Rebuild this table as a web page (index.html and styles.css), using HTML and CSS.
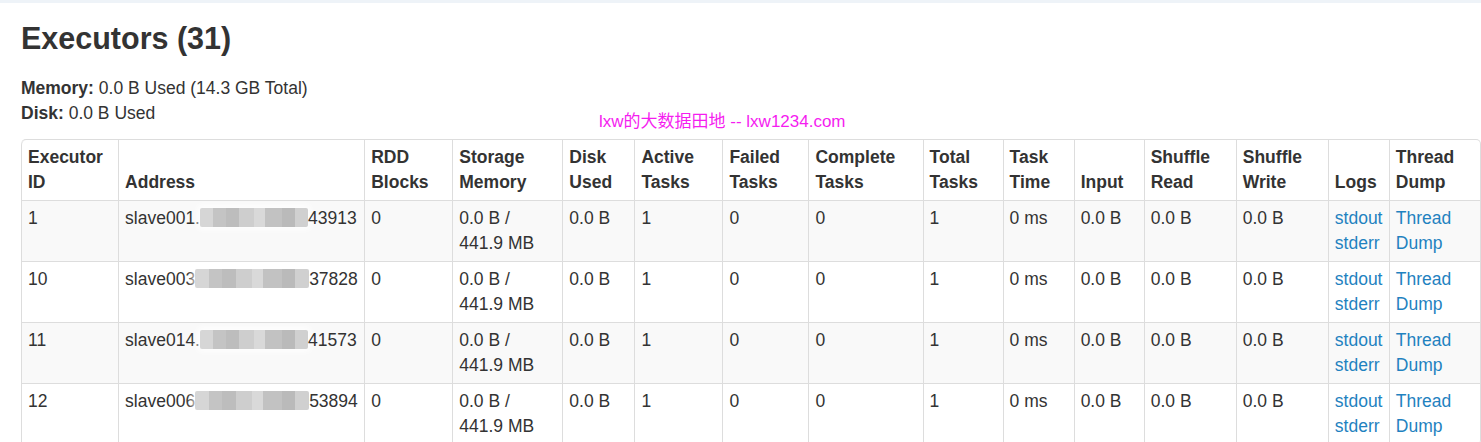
FILE: index.html
```html
<!DOCTYPE html>
<html>
<head>
<meta charset="utf-8">
<title>Executors</title>
<link rel="stylesheet" href="styles.css">
</head>
<body>
<div class="topband"></div>
<div class="container">
  <h3 class="title">Executors (31)</h3>
  <ul class="summary">
    <li><strong>Memory:</strong> 0.0 B Used (14.3 GB Total)</li>
    <li><strong>Disk:</strong> 0.0 B Used</li>
  </ul>
  <div class="watermark">lxw的大数据田地 -- lxw1234.com</div>
  <table class="table">
    <colgroup>
      <col class="c1"><col class="c2"><col class="c3"><col class="c4"><col class="c5">
      <col class="c6"><col class="c7"><col class="c8"><col class="c9"><col class="c10">
      <col class="c11"><col class="c12"><col class="c13"><col class="c14"><col class="c15">
    </colgroup>
    <thead>
      <tr>
        <th>Executor ID</th><th>Address</th><th>RDD Blocks</th><th>Storage Memory</th><th>Disk Used</th>
        <th>Active Tasks</th><th>Failed Tasks</th><th>Complete Tasks</th><th>Total Tasks</th><th>Task Time</th>
        <th>Input</th><th>Shuffle Read</th><th>Shuffle Write</th><th>Logs</th><th>Thread Dump</th>
      </tr>
    </thead>
    <tbody>
      <tr>
        <td>1</td><td class="addr">slave001.<span class="blur w1"></span>43913</td><td>0</td><td>0.0 B / 441.9 MB</td><td>0.0 B</td>
        <td>1</td><td>0</td><td>0</td><td>1</td><td>0 ms</td><td>0.0 B</td><td>0.0 B</td><td>0.0 B</td>
        <td><a href="#">stdout</a><br><a href="#">stderr</a></td><td><a href="#">Thread Dump</a></td>
      </tr>
      <tr>
        <td>10</td><td class="addr">slave003<span class="blur w2"></span>37828</td><td>0</td><td>0.0 B / 441.9 MB</td><td>0.0 B</td>
        <td>1</td><td>0</td><td>0</td><td>1</td><td>0 ms</td><td>0.0 B</td><td>0.0 B</td><td>0.0 B</td>
        <td><a href="#">stdout</a><br><a href="#">stderr</a></td><td><a href="#">Thread Dump</a></td>
      </tr>
      <tr>
        <td>11</td><td class="addr">slave014.<span class="blur w3"></span>41573</td><td>0</td><td>0.0 B / 441.9 MB</td><td>0.0 B</td>
        <td>1</td><td>0</td><td>0</td><td>1</td><td>0 ms</td><td>0.0 B</td><td>0.0 B</td><td>0.0 B</td>
        <td><a href="#">stdout</a><br><a href="#">stderr</a></td><td><a href="#">Thread Dump</a></td>
      </tr>
      <tr>
        <td>12</td><td class="addr">slave006<span class="blur w4"></span>53894</td><td>0</td><td>0.0 B / 441.9 MB</td><td>0.0 B</td>
        <td>1</td><td>0</td><td>0</td><td>1</td><td>0 ms</td><td>0.0 B</td><td>0.0 B</td><td>0.0 B</td>
        <td><a href="#">stdout</a><br><a href="#">stderr</a></td><td><a href="#">Thread Dump</a></td>
      </tr>
    </tbody>
  </table>
</div>
</body>
</html>
```
FILE: styles.css
```css
html, body {
  margin: 0;
  padding: 0;
  background: #fff;
  overflow: hidden;
}
body {
  font-family: "Liberation Sans", Arial, sans-serif;
  font-size: 17.5px;
  line-height: 25px;
  color: #333;
}
.topband {
  height: 3px;
  background: #eef3f8;
}
.container {
  position: relative;
  padding-left: 21px;
}
.title {
  margin: 10px 0 13px 0;
  font-size: 30.5px;
  line-height: 50px;
  font-weight: bold;
  color: #333;
}
.summary {
  list-style: none;
  margin: 0 0 13px 0;
  padding: 0;
}
.summary strong {
  font-weight: bold;
}
.watermark {
  position: absolute;
  left: 599px;
  top: 99px;
  font-family: "Liberation Sans", "Noto Sans CJK SC", sans-serif;
  font-size: 17px;
  line-height: 20px;
  color: #f51df0;
  white-space: nowrap;
}
.table {
  width: 1460px;
  table-layout: fixed;
  border-collapse: separate;
  border-spacing: 0;
  border: 1px solid #ddd;
  border-left: 0;
  border-radius: 5px;
}
.c1 { width: 97px; }
.c2 { width: 246px; }
.c3 { width: 88px; }
.c4 { width: 110px; }
.c5 { width: 72px; }
.c6 { width: 88px; }
.c7 { width: 86px; }
.c8 { width: 114px; }
.c9 { width: 80px; }
.c10 { width: 71px; }
.c11 { width: 70px; }
.c12 { width: 92px; }
.c13 { width: 92px; }
.c14 { width: 61px; }
.c15 { width: 91px; }
.table th,
.table td {
  padding: 5px 6px;
  text-align: left;
  border-left: 1px solid #ddd;
  border-top: 1px solid #ddd;
  overflow: hidden;
}
.table th {
  font-weight: bold;
  vertical-align: bottom;
  border-top: 0;
}
.table td {
  vertical-align: top;
}
.table td.addr {
  white-space: nowrap;
}
.table thead th:first-child {
  border-top-left-radius: 5px;
}
.table tbody tr:nth-child(odd) td {
  background: #f9f9f9;
}
.table a {
  color: #1f82c0;
  text-decoration: none;
}
.blur {
  display: inline-block;
  height: 19px;
  vertical-align: -3px;
  background: linear-gradient(90deg,
    #d6d6d6 0 12%, #c4c4c4 12% 24%, #bdbdbd 24% 36%, #cecece 36% 50%,
    #d9d9d9 50% 60%, #c2c2c2 60% 76%, #bababa 76% 88%, #d0d0d0 88% 100%);
  box-shadow: 0 0 6px 3px rgba(255, 255, 255, 0.8);
  border-radius: 2px;
}
.w1 { width: 108px; }
.w2 { width: 114px; }
.w3 { width: 108px; }
.w4 { width: 114px; }
```
